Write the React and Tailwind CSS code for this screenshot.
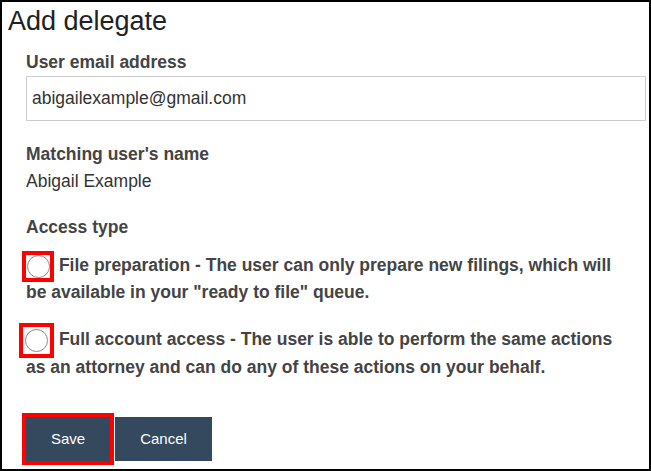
import React, { useState } from 'react';

function Radio({ checked, onChange, boxClass }) {
  return (
    <span
      onClick={onChange}
      className={`inline-flex items-center justify-center align-middle -my-1 border-4 border-[#ff0000] cursor-pointer ${boxClass}`}
    >
      <span className="w-[23px] h-[23px] shrink-0 rounded-full border-[1.5px] border-[#8a8a8a] bg-white flex items-center justify-center">
        {checked && <span className="w-[11px] h-[11px] rounded-full bg-[#34495e]" />}
      </span>
    </span>
  );
}

export default function App() {
  const [email, setEmail] = useState('abigailexample@gmail.com');
  const [access, setAccess] = useState('');

  return (
    <div
      className="w-[651px] h-[471px] border-2 border-black bg-white text-[#444] overflow-hidden pt-[1px]"
      style={{ fontFamily: '"Liberation Sans", Arial, sans-serif' }}
    >
      {/* Header */}
      <h1 className="pl-[6px] text-[27px] leading-[36px] font-normal text-[#222]">Add delegate</h1>

      <div className="pl-6 pr-[3px] text-[17.5px] leading-[27px]">
        <label className="block mt-[10px] font-bold">User email address</label>
        <input
          type="text"
          value={email}
          onChange={(e) => setEmail(e.target.value)}
          className="block w-full h-[45px] border border-[#cccccc] px-[5px] text-[17.5px] text-[#333] outline-none"
          style={{ fontFamily: '"Liberation Sans", Arial, sans-serif' }}
        />

        <div className="mt-[20px] font-bold">Matching user's name</div>
        <div className="text-[#333]">Abigail Example</div>

        <div className="mt-[19px] font-bold">Access type</div>

        {/* Access options */}
        <p className="mt-[11px] font-bold -ml-[4px]">
          <Radio
            checked={access === 'prep'}
            onChange={() => setAccess('prep')}
            boxClass="w-[32px] h-[31px]"
          />{' '}
          File preparation - The user can only prepare new filings, which will
          <br />
          <span className="pl-[4px]">be available in your "ready to file" queue.</span>
        </p>

        <p className="mt-[20px] font-bold -ml-[7px]">
          <Radio
            checked={access === 'full'}
            onChange={() => setAccess('full')}
            boxClass="w-[35px] h-[35px]"
          />{' '}
          Full account access - The user is able to perform the same actions
          <br />
          <span className="pl-[7px]">as an attorney and can do any of these actions on your behalf.</span>
        </p>

        <div className="mt-[36px] flex gap-[5px]">
          <button className="w-[84px] h-[44px] bg-[#34495e] text-white text-[15px] outline-[4px] outline-solid outline-[#ff0000]">
            Save
          </button>
          <button className="w-[97px] h-[44px] bg-[#34495e] text-white text-[15px]">Cancel</button>
        </div>
      </div>
    </div>
  );
}
